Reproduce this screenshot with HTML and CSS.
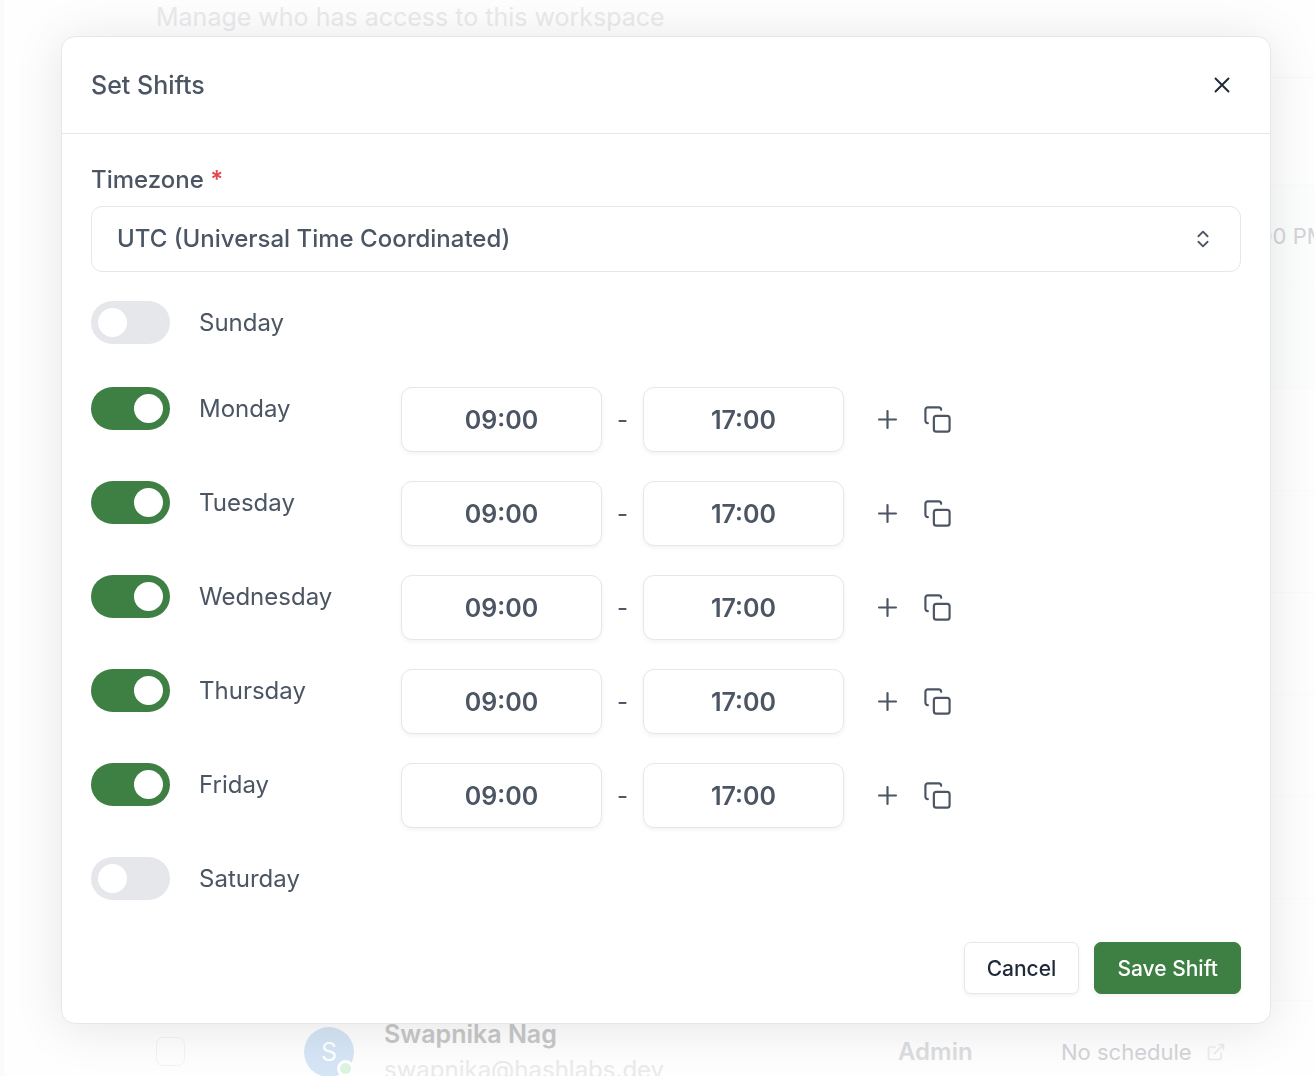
FILE: index.html
```html
<!DOCTYPE html>
<html lang="en">
<head>
    <meta charset="UTF-8">
    <meta name="viewport" content="width=device-width, initial-scale=1.0">
    <title>Set Shifts</title>
    <link rel="stylesheet" href="styles.css">
</head>
<body>
    <!-- Icons -->
    <svg class="sprite" aria-hidden="true">
        <symbol id="icon-plus" viewBox="0 0 24 24"><path d="M5 12h14M12 5v14"/></symbol>
        <symbol id="icon-copy" viewBox="0 0 24 24">
            <rect x="9" y="9" width="13" height="13" rx="2"/>
            <path d="M4 15c-1.100 0-2-.9-2-2V4c0-1.100.9-2 2-2h9c1.100 0 2 .9 2 2"/>
        </symbol>
    </svg>

    <!-- Members page behind the dialog -->
    <div class="page" inert>
        <p class="page-subtitle">Manage who has access to this workspace</p>
        <table class="members">
            <tbody>
                <tr class="members-head"><td class="col-check"></td><td class="col-user"></td><td class="col-role"></td><td class="col-schedule"></td></tr>
                <tr class="active"><td></td><td></td><td></td><td>Sun, 09:00 AM - 5:00 PM</td></tr>
                <tr class="active"><td></td><td></td><td></td><td></td></tr>
                <tr><td></td><td></td><td></td><td></td></tr>
                <tr><td></td><td></td><td></td><td></td></tr>
                <tr><td></td><td></td><td></td><td></td></tr>
                <tr><td></td><td></td><td></td><td></td></tr>
                <tr><td></td><td></td><td></td><td></td></tr>
                <tr><td></td><td></td><td></td><td></td></tr>
                <tr>
                    <td><input type="checkbox" class="row-check" aria-label="Select Swapnika Nag"></td>
                    <td>
                        <div class="user">
                            <div class="avatar">S<span class="status"></span></div>
                            <div>
                                <div class="user-name">Swapnika Nag</div>
                                <div class="user-email">swapnika@hashlabs.dev</div>
                            </div>
                        </div>
                    </td>
                    <td class="role">Admin</td>
                    <td>
                        <div class="schedule">
                            No schedule
                            <svg class="icon-link" viewBox="0 0 24 24"><path d="M15 3h6v6M10 14 21 3M18 13v6a2 2 0 0 1-2 2H5a2 2 0 0 1-2-2V8a2 2 0 0 1 2-2h6"/></svg>
                        </div>
                    </td>
                </tr>
            </tbody>
        </table>
    </div>

    <div class="overlay">
        <form class="modal" role="dialog" aria-labelledby="modal-title">
            <div class="modal-header">
                <h2 id="modal-title">Set Shifts</h2>
                <button type="button" class="icon-button close" aria-label="Close">
                    <svg viewBox="0 0 24 24"><path d="M18 6 6 18M6 6l12 12"/></svg>
                </button>
            </div>

            <div class="modal-body">
                <label class="field-label" for="timezone">Timezone <span class="required">*</span></label>
                <div class="select-wrap">
                    <select id="timezone">
                        <option>UTC (Universal Time Coordinated)</option>
                    </select>
                    <svg class="select-icon" viewBox="0 0 24 24"><path d="m7 15 5 5 5-5M7 9l5-5 5 5"/></svg>
                </div>

                <div class="days">
                    <div class="day">
                        <input type="checkbox" class="toggle" id="sunday">
                        <label for="sunday">Sunday</label>
                    </div>
                    <div class="day">
                        <input type="checkbox" class="toggle" id="monday" checked>
                        <label for="monday">Monday</label>
                        <div class="hours">
                            <input type="text" class="time" value="09:00" aria-label="Monday start">
                            <span class="dash">-</span>
                            <input type="text" class="time" value="17:00" aria-label="Monday end">
                            <div class="actions">
                                <button type="button" class="icon-button" aria-label="Add hours"><svg><use href="#icon-plus"/></svg></button>
                                <button type="button" class="icon-button" aria-label="Copy hours"><svg><use href="#icon-copy"/></svg></button>
                            </div>
                        </div>
                    </div>
                    <div class="day">
                        <input type="checkbox" class="toggle" id="tuesday" checked>
                        <label for="tuesday">Tuesday</label>
                        <div class="hours">
                            <input type="text" class="time" value="09:00" aria-label="Tuesday start">
                            <span class="dash">-</span>
                            <input type="text" class="time" value="17:00" aria-label="Tuesday end">
                            <div class="actions">
                                <button type="button" class="icon-button" aria-label="Add hours"><svg><use href="#icon-plus"/></svg></button>
                                <button type="button" class="icon-button" aria-label="Copy hours"><svg><use href="#icon-copy"/></svg></button>
                            </div>
                        </div>
                    </div>
                    <div class="day">
                        <input type="checkbox" class="toggle" id="wednesday" checked>
                        <label for="wednesday">Wednesday</label>
                        <div class="hours">
                            <input type="text" class="time" value="09:00" aria-label="Wednesday start">
                            <span class="dash">-</span>
                            <input type="text" class="time" value="17:00" aria-label="Wednesday end">
                            <div class="actions">
                                <button type="button" class="icon-button" aria-label="Add hours"><svg><use href="#icon-plus"/></svg></button>
                                <button type="button" class="icon-button" aria-label="Copy hours"><svg><use href="#icon-copy"/></svg></button>
                            </div>
                        </div>
                    </div>
                    <div class="day">
                        <input type="checkbox" class="toggle" id="thursday" checked>
                        <label for="thursday">Thursday</label>
                        <div class="hours">
                            <input type="text" class="time" value="09:00" aria-label="Thursday start">
                            <span class="dash">-</span>
                            <input type="text" class="time" value="17:00" aria-label="Thursday end">
                            <div class="actions">
                                <button type="button" class="icon-button" aria-label="Add hours"><svg><use href="#icon-plus"/></svg></button>
                                <button type="button" class="icon-button" aria-label="Copy hours"><svg><use href="#icon-copy"/></svg></button>
                            </div>
                        </div>
                    </div>
                    <div class="day">
                        <input type="checkbox" class="toggle" id="friday" checked>
                        <label for="friday">Friday</label>
                        <div class="hours">
                            <input type="text" class="time" value="09:00" aria-label="Friday start">
                            <span class="dash">-</span>
                            <input type="text" class="time" value="17:00" aria-label="Friday end">
                            <div class="actions">
                                <button type="button" class="icon-button" aria-label="Add hours"><svg><use href="#icon-plus"/></svg></button>
                                <button type="button" class="icon-button" aria-label="Copy hours"><svg><use href="#icon-copy"/></svg></button>
                            </div>
                        </div>
                    </div>
                    <div class="day">
                        <input type="checkbox" class="toggle" id="saturday">
                        <label for="saturday">Saturday</label>
                    </div>
                </div>

                <div class="modal-footer">
                    <button type="button" class="button">Cancel</button>
                    <button type="submit" class="button primary">Save Shift</button>
                </div>
            </div>
        </form>
    </div>
</body>
</html>
```

FILE: styles.css
```css
* {
    box-sizing: border-box;
}

body {
    margin: 0;
    height: 100vh;
    overflow: hidden;
    background: #fefefe;
    color: #4b5563;
    font-family: Inter, "Liberation Sans", sans-serif;
    font-size: 24px;
}

input, select, button {
    font-family: inherit;
    font-size: inherit;
    color: inherit;
    margin: 0;
}

svg {
    fill: none;
    stroke: currentColor;
    stroke-width: 2;
    stroke-linecap: round;
    stroke-linejoin: round;
}

.sprite {
    display: none;
}

/* Members page */
.page {
    height: 100%;
    overflow: hidden;
    border-left: 4px solid #fafafa;
    padding-left: 152px;
    color: #d3d4d8;
}

.page-subtitle {
    margin: 0;
    height: 77px;
    line-height: 34px;
    font-size: 25px;
    color: #e9eaec;
}

.members {
    width: 100%;
    table-layout: fixed;
    border-collapse: collapse;
    font-size: 22px;
}

.members tr {
    height: 102px;
    border-top: 1px solid #fbfbfb;
}

.members .members-head {
    height: 107px;
    border-color: #f8f8f9;
}

.members .active {
    background: #fcfefd;
}

.members td {
    padding: 0;
    white-space: nowrap;
}

.col-check {
    width: 148px;
}

.col-user {
    width: 594px;
}

.col-role {
    width: 163px;
}

.row-check {
    appearance: none;
    display: block;
    width: 29px;
    height: 29px;
    border: 1px solid #f3f3f4;
    border-radius: 7px;
}

.user {
    display: flex;
    align-items: center;
    gap: 30px;
    font-size: 25px;
    line-height: 36px;
}

.avatar {
    position: relative;
    width: 50px;
    height: 50px;
    border-radius: 50%;
    background: #d5e5f5;
    color: #fff;
    line-height: 50px;
    text-align: center;
}

/* Online dot on the avatar corner */
.status {
    position: absolute;
    right: 0;
    bottom: 0;
    width: 17px;
    height: 17px;
    border: 3px solid #fff;
    border-radius: 50%;
    background: #dcf3df;
}

.user-name {
    font-weight: 600;
    color: #c8c8c9;
}

.user-email {
    font-size: 24px;
    color: #e9eaec;
}

.role {
    font-size: 24px;
    font-weight: 600;
    color: #dcdde0;
}

.schedule {
    display: flex;
    align-items: center;
    gap: 14px;
}

.icon-link {
    width: 20px;
    height: 20px;
    color: #ebebed;
}

/* Dialog */
.overlay {
    position: fixed;
    inset: 0;
    padding: 36px 43px 0 61px;
}

.modal {
    background: #fff;
    border: 1px solid #e5e7eb;
    border-radius: 14px;
    box-shadow: 0 4px 50px rgba(0, 0, 0, 0.1);
}

.modal-header {
    display: flex;
    align-items: center;
    justify-content: space-between;
    height: 97px;
    padding: 0 35px 0 29px;
    border-bottom: 1px solid #e5e7eb;
}

.modal-header h2 {
    margin: 0;
    font-size: 25px;
    font-weight: 500;
}

.icon-button {
    display: flex;
    padding: 0;
    border: none;
    background: none;
    cursor: pointer;
}

.icon-button svg {
    width: 29px;
    height: 29px;
}

.close {
    color: #1f2937;
}

.close svg {
    width: 26px;
    height: 26px;
    stroke-width: 1.8;
}

.modal-body {
    padding: 28px 29px 29px;
}

.field-label {
    display: block;
    margin-bottom: 8px;
    line-height: 36px;
    font-weight: 500;
}

.required {
    color: #e5484d;
    font-weight: 600;
}

.select-wrap {
    position: relative;
}

.select-wrap select {
    appearance: none;
    display: block;
    width: 100%;
    height: 66px;
    padding: 0 25px 2px;
    border: 1px solid #e5e7eb;
    border-radius: 11px;
    background: #fff;
    font-weight: 500;
}

.select-icon {
    position: absolute;
    top: 22px;
    right: 27px;
    width: 22px;
    height: 22px;
    pointer-events: none;
}

.days {
    display: grid;
    gap: 29px;
    margin-top: 29px;
}

.day {
    display: grid;
    grid-template-columns: 79px 173px 1fr;
    column-gap: 29px;
    align-items: start;
    min-height: 57px;
}

.day label {
    line-height: 43px;
}

.toggle {
    appearance: none;
    display: flex;
    align-items: center;
    width: 79px;
    height: 43px;
    padding: 0 7px;
    border-radius: 22px;
    background: #e5e7eb;
    cursor: pointer;
}

.toggle::before {
    content: "";
    width: 29px;
    height: 29px;
    border-radius: 50%;
    background: #fff;
}

.toggle:checked {
    justify-content: flex-end;
    background: #3e7f44;
}

.hours {
    display: flex;
    align-items: center;
}

.time {
    width: 201px;
    height: 65px;
    padding: 0 12px;
    border: 1px solid #e5e7eb;
    border-radius: 11px;
    background: #fff;
    box-shadow: 0 2px 4px rgba(0, 0, 0, 0.05);
    font-size: 25px;
    font-weight: 600;
    text-align: center;
}

.dash {
    width: 41px;
    text-align: center;
}

.actions {
    display: flex;
    gap: 21px;
    margin-left: 29px;
}

.actions svg {
    stroke-width: 1.8;
}

.modal-footer {
    display: flex;
    justify-content: flex-end;
    gap: 15px;
    margin-top: 28px;
}

.button {
    height: 52px;
    padding: 0 22px;
    border: 1px solid #e5e7eb;
    border-radius: 7px;
    background: #fff;
    box-shadow: 0 2px 4px rgba(0, 0, 0, 0.05);
    color: #1f2937;
    font-size: 21px;
    font-weight: 500;
    cursor: pointer;
}

.primary {
    border-color: #3e7f44;
    background: #3e7f44;
    color: #fff;
}
```
